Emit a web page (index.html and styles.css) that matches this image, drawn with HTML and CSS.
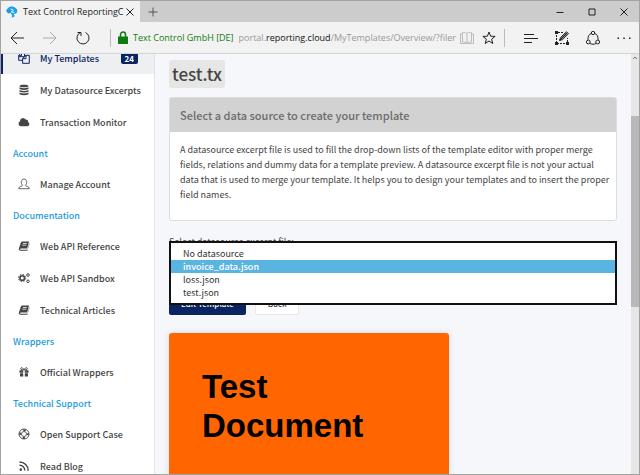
FILE: index.html
```
<!DOCTYPE html>
<html lang="en">
<head>
<meta charset="utf-8">
<title>Text Control ReportingCloud</title>
<link rel="stylesheet" href="styles.css">
</head>
<body>
<div class="window">
  <header class="titlebar">
    <div class="tab">
      <svg class="tab-logo" viewBox="0 0 12 12" aria-hidden="true"><path d="M2.500 1.500 5.200.2l2 .5 1.600.6 2.300 2.200.2 2.200-1.200 1.700-2.600.5 1.300 2.300-3 1.500.2-2.400L4.900 7 2.500 7.600.500 5.700.300 4z" fill="#1ba1e2"/><path d="m4.500 2.800 3 1.500-2.300 1.700 3.200.4" fill="none" stroke="#f2f2f2"/></svg>
      <span class="tab-title">Text Control ReportingC</span>
      <button class="tab-close" type="button" aria-label="Close tab"><svg viewBox="0 0 8 8"><path d="m.5.500 7 7m0-7-7 7"/></svg></button>
    </div>
    <button class="tab-new" type="button" aria-label="New tab"><svg viewBox="0 0 10 10"><path d="M5 .5v9M.5 5h9"/></svg></button>
    <div class="window-buttons">
      <button type="button" aria-label="Minimize"><svg viewBox="0 0 8 8"><path d="M.5 4.500h7"/></svg></button>
      <button type="button" aria-label="Maximize"><svg viewBox="0 0 8 8"><path d="M1 1h6v6H1z"/></svg></button>
      <button type="button" aria-label="Close"><svg viewBox="0 0 8 8"><path d="m.5.500 7 7m0-7-7 7"/></svg></button>
    </div>
  </header>

  <div class="toolbar">
    <div class="history">
      <button type="button" aria-label="Back"><svg viewBox="0 0 14 14"><path d="M14 7H1m6-6L1 7l6 6"/></svg></button>
      <button type="button" class="muted" aria-label="Forward"><svg viewBox="0 0 14 14"><path d="M0 7h13M7 1l6 6-6 6"/></svg></button>
      <button type="button" aria-label="Refresh"><svg viewBox="0 0 14 14"><path d="M4.500 1.500a6 6 0 1 0 5 0M1.500 1.500h3.500V5"/></svg></button>
    </div>
    <div class="address">
      <svg class="lock" viewBox="0 0 10 13" aria-hidden="true"><path d="M0 5.500h10V13H0z" fill="#107c10"/><path d="M2.500 6V3.500a2.500 2.500 0 0 1 5 0V6" fill="none" stroke="#107c10" stroke-width="1.500"/></svg>
      <span class="owner">Text Control GmbH [DE]</span>
      <span class="url">portal.<strong>reporting.cloud</strong>/MyTemplates/Overview/?filer</span>
      <button type="button" class="faint" aria-label="Reading view"><svg viewBox="0 0 14 14"><path d="M7 2.500v10M7 2.500C5.500 1.300 3.500 1.300 2.500 1.500v9.500c1.500-.2 3.500 0 4.500 1.500 1-1.500 3-1.700 4.500-1.500V1.500C10.500 1.300 8.500 1.300 7 2.500M2.500 3h-2v9.500h13V3h-2"/></svg></button>
      <button type="button" aria-label="Favorite"><svg viewBox="0 0 14 14"><path d="m7 1 1.600 4.200 4.500.2-3.500 2.800 1.200 4.300L7 10l-3.800 2.500 1.200-4.300L.9 5.400l4.500-.2z"/></svg></button>
    </div>
    <div class="tools">
      <button type="button" aria-label="Hub"><svg viewBox="0 0 14 14"><path d="M0 3.500h10M0 7.500h14M0 11.500h8"/></svg></button>
      <button type="button" aria-label="Web note"><svg viewBox="0 0 14 14"><path d="M8 1.500H1.500v11h11V7" stroke-dasharray="2 1"/><path d="m4.500 9.500 1-3L11.500.700l2 2L7.500 8.600z"/><path d="m5 9 7-7" stroke-width="1.500"/><path d="M0 0h3v3H0zM0 11h3v3H0zM11 11h3v3h-3z" fill="#222" stroke="none"/></svg></button>
      <button type="button" aria-label="Share"><svg viewBox="0 0 14 14"><path d="M5.200 2.500C3 3.200 1.700 5.500 2 8.800M8.800 2.500c2.200.7 3.500 3 3.200 6.300M4 12.500c2 1 4 1 6 0"/><circle cx="7" cy="2" r="1.700"/><circle cx="2.300" cy="11" r="1.900"/><circle cx="11.700" cy="11" r="1.900"/></svg></button>
      <button type="button" aria-label="More"><svg viewBox="0 0 14 14"><path d="M.5 6.500H2v1.500H.5zM6.300 6.500h1.500v1.500H6.300zM12 6.500h1.500v1.500H12z" fill="#222" stroke="none"/></svg></button>
    </div>
  </div>

  <div class="page">
    <nav class="sidebar">
      <a class="item active" href="#"><svg viewBox="0 0 12 12"><path d="M3.500.700h3v4H1m2.500-4L.700 3.500v4.800H4M3.500.700v3H.700M8 3.300h3.300v8H4.600V6.500L8 3.300v3.400H4.600" fill="none" stroke="currentColor"/></svg><span>My Templates</span><span class="badge">24</span></a>
      <a class="item" href="#"><svg viewBox="0 0 12 12"><path d="M1.500 2C1.500.3 10.500.3 10.500 2S1.500 3.700 1.500 2zM1.500 3.300q4.500 1.800 9 0V5q-4.500 1.800-9 0zM1.500 6q4.500 1.800 9 0v1.600q-4.500 1.800-9 0zM1.500 8.600q4.500 1.800 9 0v1.700q-4.500 2-9 0z"/></svg><span>My Datasource Excerpts</span></a>
      <a class="item" href="#"><svg viewBox="0 0 12 12"><path d="M3 10.300A2.700 2.700 0 0 1 2 5.200 3 3 0 0 1 7.600 3.600 1.900 1.900 0 0 1 10 5.900a2.300 2.300 0 0 1-.5 4.400z"/></svg><span>Transaction Monitor</span></a>
      <h2>Account</h2>
      <a class="item" href="#"><svg viewBox="0 0 12 12"><path d="M4.600 7.300C2.500 5.500 3 1 6 1s3.500 4.500 1.400 6.300c0 1 3.900.7 3.900 3.400H.7c0-2.700 3.900-2.400 3.900-3.400z" fill="none" stroke="currentColor" stroke-width=".8"/></svg><span>Manage Account</span></a>
      <h2>Documentation</h2>
      <a class="item" href="#"><svg viewBox="0 0 12 12"><path fill-rule="evenodd" d="M4 1.500h7L9.200 8.500H2.500q-1 .8 0 1.200h7L11.200 3l.2 1-2 6.700H2Q.400 10 .900 8.500L3 2.300zm.9 1.500-.2.700h4l.2-.7zM4.400 4.800l-.2.700h4l.2-.7z"/></svg><span>Web API Reference</span></a>
      <a class="item" href="#"><svg viewBox="0 0 12 12"><g fill="none" stroke="currentColor"><circle cx="4.200" cy="6" r="2.300" stroke-width="1.600"/><circle cx="4.200" cy="6" r="3.700" stroke-width="1" stroke-dasharray="1.500 1.400"/><circle cx="10" cy="3" r="1.300"/><circle cx="10" cy="9.300" r="1.300"/></g></svg><span>Web API Sandbox</span></a>
      <a class="item" href="#"><svg viewBox="0 0 12 12"><path fill-rule="evenodd" d="M4 1.500h7L9.200 8.500H2.500q-1 .8 0 1.200h7L11.200 3l.2 1-2 6.700H2Q.400 10 .900 8.500L3 2.300zm.9 1.500-.2.700h4l.2-.7zM4.400 4.800l-.2.700h4l.2-.7z"/></svg><span>Technical Articles</span></a>
      <h2>Wrappers</h2>
      <a class="item" href="#"><svg viewBox="0 0 12 12"><path d="M1.500 4.200h3.700v2.500H1.500zM6.800 4.200h3.700v2.500H6.800zM2 7.200h3.200v3.300H2zM6.800 7.200H10v3.300H6.800z"/><path d="M5.700 4C3 4 2.300 3 3 2s2 0 3 2c1-2 2.300-3 3-2s0 2-2.700 2" fill="none" stroke="currentColor"/></svg><span>Official Wrappers</span></a>
      <h2>Technical Support</h2>
      <a class="item" href="#"><svg viewBox="0 0 12 12"><g fill="none" stroke="currentColor"><circle cx="6" cy="6" r="5" stroke-width=".9"/><circle cx="6" cy="6" r="2.500" stroke-width=".8"/><circle cx="6" cy="6" r="3.800" stroke-width="2" stroke-dasharray="2.400 3.570" stroke-dashoffset="1.200"/></g></svg><span>Open Support Case</span></a>
      <a class="item" href="#"><svg viewBox="0 0 12 12"><circle cx="2.800" cy="9.600" r="1.300"/><path d="M1.500 5.300a5.200 5.200 0 0 1 5.300 5.300M1.500 2a8.600 8.600 0 0 1 8.700 8.700" fill="none" stroke="currentColor" stroke-width="1.400"/></svg><span>Read Blog</span></a>
    </nav>

    <main class="content">
      <h1>test.tx</h1>
      <section class="card">
        <h3>Select a data source to create your template</h3>
        <p>A datasource excerpt file is used to fill the drop-down lists of the template editor with proper merge fields, relations and dummy data for a template preview. A datasource excerpt file is not your actual data that is used to merge your template. It helps you to design your templates and to insert the proper field names.</p>
      </section>
      <form class="picker">
        <label for="source">Select datasource excerpt file:</label>
        <select id="source" size="4">
          <option>No datasource</option>
          <option selected>invoice_data.json</option>
          <option>loss.json</option>
          <option>test.json</option>
        </select>
        <div class="actions">
          <button class="primary" type="button">Edit Template</button>
          <button class="secondary" type="button">Back</button>
        </div>
      </form>
      <div class="thumb">Test<br>Document</div>
    </main>

    <div class="scrollbar" aria-hidden="true">
      <svg viewBox="0 0 8 8"><path d="m2 5 2-2 2 2" fill="none" stroke="#777"/></svg>
      <div class="scroll-thumb"></div>
    </div>
  </div>
</div>
</body>
</html>
```
FILE: styles.css
```
* { box-sizing: border-box; }
body {
  margin: 0;
  font-family: "Noto Sans CJK SC", "Noto Sans", sans-serif;
  font-size: 9px;
  color: #444;
}
button {
  flex: none;
  font: inherit;
  padding: 0;
  border: 0;
  background: none;
}
svg { display: block; flex: none; }

.window {
  display: flex;
  flex-direction: column;
  height: 100vh;
  overflow: hidden;
  border: 1px solid #a3a3a3;
}

/* Title bar */
.titlebar {
  display: flex;
  flex: none;
  height: 21px;
  background: #ccc;
  font-family: "Open Sans", sans-serif;
}
.titlebar button svg { fill: none; stroke: #222; width: 8px; height: 8px; }
.tab {
  display: flex;
  align-items: center;
  width: 139px;
  padding: 0 6px 0 5px;
  background: #f2f2f2;
}
.tab-logo { width: 12px; height: 12px; }
.tab-title {
  margin: 0 auto 0 5px;
  white-space: nowrap;
  color: #222;
}
.tab-new { padding: 0 8px; }
.titlebar .tab-new svg { width: 10px; height: 10px; stroke: #555; }
.window-buttons {
  display: flex;
  gap: 24px;
  margin-left: auto;
  padding-right: 11px;
}

/* Address bar */
.toolbar {
  display: flex;
  align-items: center;
  flex: none;
  height: 32px;
  background: #f2f2f2;
  border-bottom: 1px solid #d4d4d4;
  font-family: "Open Sans", sans-serif;
}
.toolbar button svg {
  width: 14px;
  height: 14px;
  fill: none;
  stroke: #222;
}
.toolbar .muted svg { stroke: #aaa; }
.toolbar .faint svg { stroke: #bbb; }
.history {
  display: flex;
  gap: 19px;
  padding: 0 20px 0 9px;
}
.address {
  display: flex;
  align-items: center;
  flex: 1;
  min-width: 0;
  height: 18px;
  padding: 0 8px 0 7px;
  border: solid #bbb;
  border-width: 0 1px;
}
.lock { width: 10px; height: 13px; }
.owner { margin: 0 5px; color: #107c10; white-space: nowrap; }
.url { flex: 1; color: #999; white-space: nowrap; }
.url strong { font-weight: 400; color: #111; }
.address button + button { margin-left: 8px; }
.tools {
  display: flex;
  flex: none;
  gap: 17px;
  padding: 0 8px 0 19px;
}

/* Page */
.page {
  display: flex;
  flex: 1;
  min-height: 0;
  overflow: hidden;
  background: #f5f7fb;
}
.sidebar {
  flex: none;
  width: 154px;
  margin-top: -12px;
  background: #fff;
  border-right: 1px solid #e1e3e8;
  font-weight: 500;
}
.item {
  display: flex;
  align-items: center;
  height: 32px;
  padding: 0 16px 0 17px;
  color: #444;
  text-decoration: none;
  white-space: nowrap;
}
.item svg {
  width: 12px;
  height: 12px;
  margin-right: 10px;
  fill: currentColor;
}
.active {
  padding-left: 15px;
  border-left: 2px solid #0a2463;
  background: #eeeff1;
  color: #0a2463;
}
.badge {
  margin-left: auto;
  padding: 0 4px;
  border-radius: 2px;
  background: #0a2463;
  color: #fff;
  font-size: 8px;
  font-weight: 700;
  line-height: 11px;
}
.sidebar h2 {
  height: 30px;
  margin: 0;
  padding-left: 12px;
  color: #1c9ce0;
  font-size: 9px;
  font-weight: 500;
  line-height: 32px;
}

.content {
  flex: 1;
  min-width: 0;
  padding: 6px 14px 0;
}
h1 {
  width: fit-content;
  margin: 0 0 9px;
  padding: 0 3px;
  border-radius: 3px;
  background: #e6e6e6;
  font-size: 17px;
  font-weight: 500;
  line-height: 28px;
}
.card {
  border: 1px solid #ddd;
  border-radius: 3px;
  background: #fff;
}
.card h3 {
  margin: 0;
  padding: 0 10px;
  background: #d2d2d2;
  color: #6c6c6c;
  font-size: 11px;
  font-weight: 500;
  line-height: 34px;
}
.card p {
  margin: 0;
  padding: 10px 4px 18px 10px;
  line-height: 15px;
}

.picker {
  position: relative;
  margin-top: 12px;
}
.picker label { display: block; line-height: 18px; }
.picker select {
  position: absolute;
  top: 8px;
  left: 0;
  width: 100%;
  height: 64px;
  padding: 4px 0;
  overflow: hidden;
  border: 2px solid #111;
  border-radius: 0;
  outline: 0;
  background: #fff;
  font: inherit;
}
.picker option {
  min-height: 13px;
  padding: 0 12px;
  color: #333;
  line-height: 13px;
}
.picker option:checked {
  background: #5ab4e2 linear-gradient(#5ab4e2, #5ab4e2);
  color: #fff;
  font-weight: 500;
}
.actions {
  display: flex;
  gap: 9px;
  margin-top: 42px;
}
.actions button {
  height: 22px;
  padding: 0 12px;
  border-radius: 2px;
  font-size: 8px;
  font-weight: 500;
  line-height: 22px;
}
.actions .primary { background: #0a2463; color: #fff; }
.actions .secondary { border: 1px solid #e8e8e8; background: #fff; color: #444; line-height: 20px; }

.thumb {
  width: 280px;
  height: 200px;
  margin-top: 18px;
  padding: 34px 33px;
  border-radius: 3px;
  background: #f60;
  box-shadow: 0 0 6px #d5dbe3;
  color: #000;
  font: 700 33px/39px "Liberation Sans", sans-serif;
}

.scrollbar { flex: none; width: 8px; background: #e6e6e6; }
.scrollbar svg { width: 8px; height: 8px; }
.scroll-thumb { height: 191px; margin-top: 54px; background: #b8b8b8; }
```
